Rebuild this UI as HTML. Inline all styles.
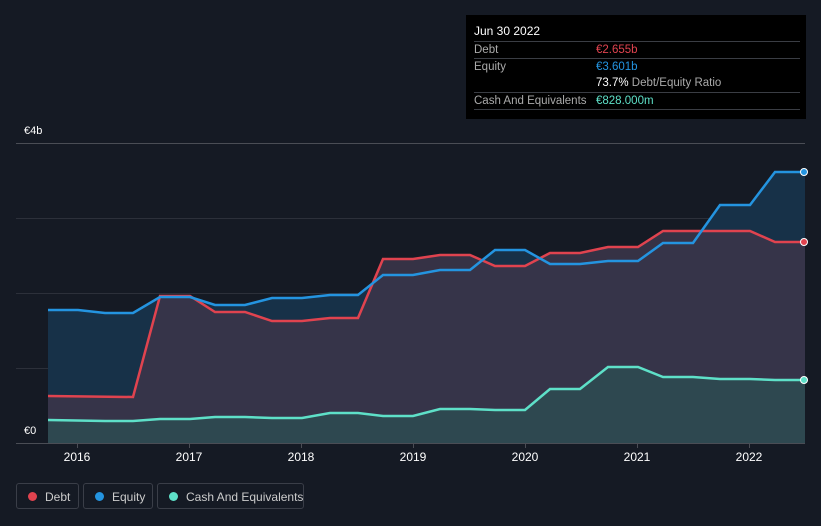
<!DOCTYPE html>
<html><head><meta charset="utf-8"><style>
body{margin:0;width:821px;height:526px;background:#151a24;font-family:"Liberation Sans",sans-serif;overflow:hidden;position:relative}
.tt{position:absolute;left:466px;top:15px;width:340px;height:104px;background:#000;color:#fff;font-size:11.5px}
.row{position:absolute;left:8px;width:326px;border-top:1px solid #3a3d44;height:17px;line-height:17px;color:#aaa;white-space:nowrap}
.row span{position:absolute;left:122px}
.leg{position:absolute;top:483px;height:26px;border:1px solid #3a3e48;border-radius:3px;color:#ccc;font-size:12px;line-height:26px;box-sizing:border-box;white-space:nowrap}
.leg i{position:absolute;left:11px;top:8px;width:9px;height:9px;border-radius:50%}
.lbl{position:absolute;color:#fff;font-size:11px}
</style></head><body>
<svg width="821" height="526" style="position:absolute;left:0;top:0">
<g stroke="#2c303a" stroke-width="1"><line x1="16" y1="218.5" x2="805" y2="218.5"/><line x1="16" y1="293.5" x2="805" y2="293.5"/><line x1="16" y1="368.5" x2="805" y2="368.5"/></g>
<line x1="16" y1="143.5" x2="805" y2="143.5" stroke="#4a4d55"/>
<polygon fill="#173148" points="48,310 78,310 105,313 133,313 160,297 190,297 215,305 245,305 272,298 302,298 330,295 358,295 383,275 413,275 440,270 470,270 495,250 525,250 550,264 580,264 608,261 638,261 663,243 693,243 720,205 750,205 775,172 805,172 805,443 48,443"/>
<polygon fill="#3a3549" fill-opacity="0.9" points="48,396 133,397 160,296 190,296 215,312 245,312 272,321 302,321 330,318 358,318 383,259 413,259 440,255 470,255 495,266 525,266 550,253 580,253 608,247 638,247 663,231 693,231 720,231 750,231 775,242 805,242 805,443 48,443"/>
<polygon fill="#2e4850" points="48,420 105,421 133,421 160,419 190,419 215,417 245,417 272,418 302,418 330,413 358,413 383,416 413,416 440,409 470,409 495,410 525,410 550,389 580,389 608,367 638,367 663,377 693,377 720,379 750,379 775,380 805,380 805,443 48,443"/>
<polyline fill="none" stroke="#e0434f" stroke-width="2.5" points="48,396 133,397 160,296 190,296 215,312 245,312 272,321 302,321 330,318 358,318 383,259 413,259 440,255 470,255 495,266 525,266 550,253 580,253 608,247 638,247 663,231 693,231 720,231 750,231 775,242 805,242"/>
<polyline fill="none" stroke="#2494e0" stroke-width="2.5" points="48,310 78,310 105,313 133,313 160,297 190,297 215,305 245,305 272,298 302,298 330,295 358,295 383,275 413,275 440,270 470,270 495,250 525,250 550,264 580,264 608,261 638,261 663,243 693,243 720,205 750,205 775,172 805,172"/>
<polyline fill="none" stroke="#5ee0c8" stroke-width="2.5" points="48,420 105,421 133,421 160,419 190,419 215,417 245,417 272,418 302,418 330,413 358,413 383,416 413,416 440,409 470,409 495,410 525,410 550,389 580,389 608,367 638,367 663,377 693,377 720,379 750,379 775,380 805,380"/>
<circle cx="804" cy="172" r="3.5" fill="#2494e0" stroke="#fff"/>
<circle cx="804" cy="242" r="3.5" fill="#e0434f" stroke="#fff"/>
<circle cx="804" cy="380" r="3.5" fill="#5ee0c8" stroke="#fff"/>
<rect x="16" y="420" width="32" height="23" fill="#151a24"/>
<line x1="16" y1="443.5" x2="805" y2="443.5" stroke="#4a4d55"/>
<g stroke="#4a4d55"><line x1="77.5" y1="444" x2="77.5" y2="448"/><line x1="189.5" y1="444" x2="189.5" y2="448"/><line x1="301.5" y1="444" x2="301.5" y2="448"/><line x1="413.5" y1="444" x2="413.5" y2="448"/><line x1="525.5" y1="444" x2="525.5" y2="448"/><line x1="637.5" y1="444" x2="637.5" y2="448"/><line x1="749.5" y1="444" x2="749.5" y2="448"/></g>
<g fill="#fff" font-size="12" text-anchor="middle" font-family="Liberation Sans"><text x="77" y="461">2016</text><text x="189" y="461">2017</text><text x="301" y="461">2018</text><text x="413" y="461">2019</text><text x="525" y="461">2020</text><text x="637" y="461">2021</text><text x="749" y="461">2022</text></g>
</svg>
<div class="lbl" style="left:24px;top:125px">€4b</div>
<div class="lbl" style="left:24px;top:425px">€0</div>
<div class="tt">
<div style="position:absolute;left:8px;top:9px;font-size:12px">Jun 30 2022</div>
<div class="row" style="top:26px">Debt<span style="color:#e0434f">€2.655b</span></div>
<div class="row" style="top:43px">Equity<span style="color:#2494e0">€3.601b</span></div>
<div class="row" style="top:60px;border-top:none"><span style="color:#aaa"><b style="color:#fff;font-weight:normal">73.7%</b> Debt/Equity Ratio</span></div>
<div class="row" style="top:77px">Cash And Equivalents<span style="color:#5ee0c8">€828.000m</span></div>
<div class="row" style="top:94px;height:0"></div>
</div>
<div class="leg" style="left:16px;width:63px"><i style="background:#e0434f"></i><span style="position:absolute;left:28px">Debt</span></div>
<div class="leg" style="left:83px;width:70px"><i style="background:#2494e0"></i><span style="position:absolute;left:28px">Equity</span></div>
<div class="leg" style="left:157px;width:147px"><i style="background:#5ee0c8"></i><span style="position:absolute;left:28px">Cash And Equivalents</span></div>
</body></html>
